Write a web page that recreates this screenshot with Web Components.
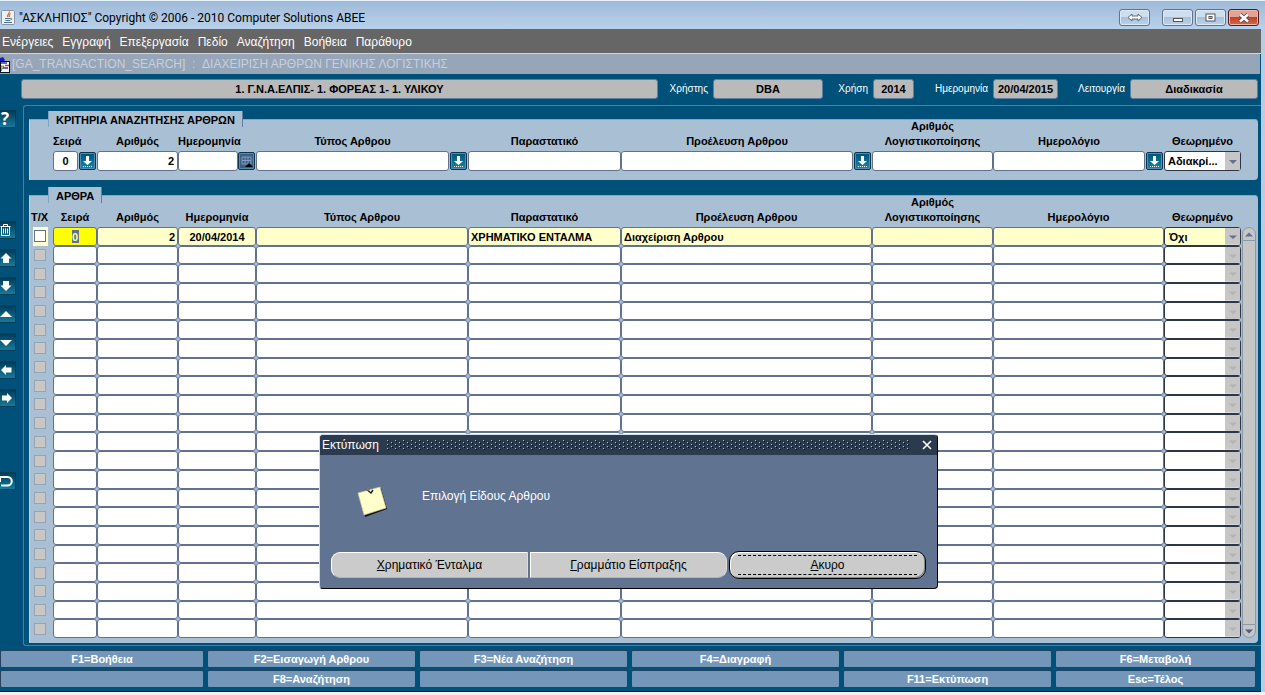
<!DOCTYPE html>
<html lang="el">
<head>
<meta charset="utf-8">
<title>ΑΣΚΛΗΠΙΟΣ</title>
<style>
html, body { margin: 0; height: 100%; }
body { font-family: "Liberation Sans", Arial, sans-serif; background: #eef2f5; overflow: hidden; }
</style>
</head>
<body>
<app-window></app-window>

<template id="app-window">
<style>
:host { display: flex; flex-direction: column; height: 100vh; box-sizing: border-box; padding-bottom: 3px; position: relative; background: #eef2f5; }
.frame { flex: 1; min-height: 0; display: flex; flex-direction: column; margin-right: 4px; background: #005179; border-bottom: 1px solid #04121c; box-shadow: 4px 0 #b7cde3; }
.work { flex: 1; min-height: 0; display: flex; }
.stage { flex: 1; min-width: 0; display: flex; flex-direction: column; margin-bottom: 4px; border: 1px solid #4f7c9e; border-right: 0; border-radius: 3px 0 0 3px; padding: 13px 3px 2px 5px; gap: 15px; }
group-panel.fill { flex: 1; min-height: 0; }
message-dialog { position: absolute; left: 319px; top: 434px; z-index: 2; }
</style>
<title-bar></title-bar>
<div class="frame">
  <menu-bar></menu-bar>
  <form-title></form-title>
  <info-header></info-header>
  <div class="work">
    <tool-rail></tool-rail>
    <main class="stage">
      <group-panel heading="ΚΡΙΤΗΡΙΑ ΑΝΑΖΗΤΗΣΗΣ ΑΡΘΡΩΝ"><search-criteria></search-criteria></group-panel>
      <group-panel class="fill" heading="ΑΡΘΡΑ"><record-table></record-table></group-panel>
    </main>
  </div>
  <key-bar></key-bar>
</div>
<message-dialog heading="Εκτύπωση">Επιλογή Είδους Αρθρου</message-dialog>
</template>

<template id="title-bar">
<style>
:host { display: flex; align-items: center; height: 29px; padding: 0 6px 0 1px; box-sizing: border-box; border-top: 1px solid #e6f3fa; background: linear-gradient(#9fbad8, #b9d1ea); color: #000; }
.logo { width: 14px; height: 15px; margin: 5px 4px 0 0; }
h1 { margin: 5px 0 0; flex: 1; font: 12px/16px Roboto, sans-serif; white-space: nowrap; }
button { display: flex; align-items: center; justify-content: center; width: 31px; height: 17px; margin: 5px 0 0 2px; padding: 0; border: 1px solid #60748c; border-radius: 3px; background: linear-gradient(#cfdeee 45%, #a9c0da 50%, #bdd3ea); box-shadow: inset 0 0 0 1px #dce9f6; }
button.wide { margin-right: 10px; }
button.close { border-color: #5a1a1a; background: linear-gradient(#e4a394 45%, #c2402a 50%, #cf6a4d); box-shadow: inset 0 0 0 1px #e8b8aa; }
</style>
<svg class="logo" viewBox="0 0 14 15"><rect x=".5" y=".5" width="13" height="14" rx="1" fill="#eef1f3" stroke="#8695a3"/><path d="M8 1.500c1.500 2-3 3-1 5.500M9.500 3.500c-2 1-1 2-1 3.500" fill="none" stroke="#e0702c" stroke-width="1.300"/><path d="M4 8.500h5.500M4.500 10.500h4.500M3 12.500h8M9.500 8.500c2-.5 2 1 0 1.500" fill="none" stroke="#4a7296"/></svg>
<h1>"ΑΣΚΛΗΠΙΟΣ" Copyright © 2006 - 2010 Computer Solutions ΑΒΕΕ</h1>
<button class="wide" aria-label="Resize"><svg width="16" height="9" viewBox="0 0 16 9"><path d="M1 4.500 5 1v2h6V1l4 3.500L11 8V6H5v2z" fill="#fff" stroke="#5b6c80"/></svg></button>
<button aria-label="Minimize"><svg width="12" height="10" viewBox="0 0 12 10"><rect x="1.500" y="5.500" width="9" height="3" fill="#fff" stroke="#50555c"/></svg></button>
<button aria-label="Maximize"><svg width="11" height="9" viewBox="0 0 11 9"><rect x="1" y="1" width="9" height="7" fill="#fff" stroke="#50555c"/><rect x="4" y="3.500" width="3" height="2" fill="#9db5cf" stroke="#50555c"/></svg></button>
<button class="close" aria-label="Close"><svg width="12" height="10" viewBox="0 0 12 10"><path d="M2 1.500l8 7M10 1.500l-8 7" stroke="#574044" stroke-width="4"/><path d="M2 1.500l8 7M10 1.500l-8 7" stroke="#fff" stroke-width="2.500"/></svg></button>
</template>

<template id="menu-bar">
<style>
:host { display: block; background: #666; border-bottom: 1px solid #d8d4cc; }
nav { display: flex; gap: 9px; height: 24px; padding-left: 2px; }
a { color: #fff; text-decoration: none; font-size: 12px; line-height: 26px; white-space: nowrap; }
</style>
<nav><a href="#">Ενέργειες</a><a href="#">Εγγραφή</a><a href="#">Επεξεργασία</a><a href="#">Πεδίο</a><a href="#">Αναζήτηση</a><a href="#">Βοήθεια</a><a href="#">Παράθυρο</a></nav>
</template>

<template id="form-title">
<style>
:host { display: flex; align-items: center; height: 20px; margin-right: 1px; background: #97a5b9; color: #c6d0dd; }
svg { width: 10px; height: 17px; margin-right: 2px; flex: none; }
h2 { margin: 0; font-size: 12px; line-height: 22px; font-weight: normal; white-space: pre; }
</style>
<svg viewBox="0 0 10 17"><path d="M0 2l3-1 2 3-2 2H0z" fill="#1c1cc0"/><rect x=".5" y="5.500" width="9" height="11" fill="#fff" stroke="#0d1020"/><path d="M1 7h6M3 12h5" stroke="#2436c8" stroke-width="1.500"/><path d="M5 9.500h4" stroke="#c33" stroke-width="1.500"/><path d="M1 10h3l-3 5z" fill="#f5e63b" stroke="#222" stroke-width=".5"/></svg>
<h2>[GA_TRANSACTION_SEARCH]  :  ΔΙΑΧΕΙΡΙΣΗ ΑΡΘΡΩΝ ΓΕΝΙΚΗΣ ΛΟΓΙΣΤΙΚΗΣ</h2>
</template>

<template id="info-header">
<style>
:host { display: grid; grid-template-columns: 637fr 55px 110fr 50px 41px 79px 65px 72px 128fr; align-items: center; padding: 5px 3px 6px 21px; }
label { color: #fff; font-size: 10px; line-height: 20px; text-align: right; padding-right: 5px; white-space: nowrap; }
input { min-width: 0; width: 100%; height: 20px; box-sizing: border-box; margin: 0; padding: 0; border: 1px solid #5d7f9f; border-radius: 3px; background: #bababa; color: #000; text-align: center; font: bold 11px "Liberation Sans", sans-serif; }
</style>
<input aria-label="Φορέας" readonly value="1. Γ.Ν.Α.ΕΛΠΙΣ- 1. ΦΟΡΕΑΣ 1- 1. ΥΛΙΚΟΥ">
<label for="u">Χρήστης</label><input id="u" readonly value="DBA">
<label for="y">Χρήση</label><input id="y" readonly value="2014">
<label for="d">Ημερομηνία</label><input id="d" readonly value="20/04/2015">
<label for="m">Λειτουργία</label><input id="m" readonly value="Διαδικασία">
</template>

<template id="tool-rail">
<style>
:host { display: flex; flex-direction: column; gap: 10px; width: 23px; padding-top: 5px; }
button { width: 16px; height: 18px; padding: 0; border: 1px solid #0b3c57; border-left: 0; background: linear-gradient(#003c5a, #157a9c); display: flex; align-items: center; }
button:first-of-type { margin-bottom: 83px; }
button:last-of-type { margin-top: 55px; }
svg { width: 14px; height: 16px; fill: #fff; }
.q { color: #fff; font: bold 17px/16px "Open Sans", sans-serif; padding-left: 1px; }
</style>
<button aria-label="Help"><span class="q">?</span></button>
<button aria-label="Delete"><svg viewBox="0 0 14 16"><path d="M.5 4.500h10M3.500 4V2.500h4V4M1.500 5v8.500h8V5M3.500 6.500v5M5.500 6.500v5M7.500 6.500v5" fill="none" stroke="#fff"/></svg></button>
<button aria-label="Previous"><svg viewBox="0 0 14 16"><path d="M6 3 11.500 8.500H9V13H3V8.500H.5z"/></svg></button>
<button aria-label="Next"><svg viewBox="0 0 14 16"><path d="M6 13 11.500 7.500H9V3H3v4.500H.5z"/></svg></button>
<button aria-label="Page up"><svg viewBox="0 0 14 16"><path d="M6 5 12 11H0z"/></svg></button>
<button aria-label="Page down"><svg viewBox="0 0 14 16"><path d="M6 12 12 6H0z"/></svg></button>
<button aria-label="Back"><svg viewBox="0 0 14 16"><path d="M1 8 6 3v2.500h5.500v5H6V13z"/></svg></button>
<button aria-label="Forward"><svg viewBox="0 0 14 16"><path d="M12 8 7 3v2.500H2v5h5V13z"/></svg></button>
<button aria-label="Undo"><svg viewBox="0 0 14 16"><path d="M0 4h7.500a4 4 0 0 1 0 8.500H1M0 4v5" fill="none" stroke="#fff" stroke-width="2"/></svg></button>
</template>

<template id="group-panel">
<style>
:host { display: flex; flex-direction: column; position: relative; border-radius: 1px 4px 4px 1px; background: #a9bfd3; box-shadow: inset 0 1px #86a6bf, inset 1px 0 #c3d3e0; }
h3 { position: absolute; left: 19px; top: -8px; margin: 0; padding: 0 8px; height: 16px; background: #a9bfd3; box-shadow: inset 1px 0 #7fa5c2, inset -1px 0 #5f7f9c; font-size: 11px; line-height: 18px; font-weight: bold; white-space: nowrap; }
</style>
<h3></h3><slot></slot>
</template>

<template id="search-criteria">
<style>
:host { display: grid; grid-template-columns: 44px 81px 78px 212fr 153fr 251fr 121fr 171fr 77px; padding: 0 17px 9px 24px; }
</style>
<criteria-field label="Σειρά" value="0" align="center" action="list"></criteria-field>
<criteria-field label="Αριθμός" value="2" align="right"></criteria-field>
<criteria-field label="Ημερομηνία" action="calendar"></criteria-field>
<criteria-field label="Τύπος Αρθρου" action="list"></criteria-field>
<criteria-field label="Παραστατικό"></criteria-field>
<criteria-field label="Προέλευση Αρθρου" action="list"></criteria-field>
<criteria-field label="Αριθμός Λογιστικοποίησης"></criteria-field>
<criteria-field label="Ημερολόγιο" action="list"></criteria-field>
<criteria-field label="Θεωρημένο" kind="select" value="Αδιακρί..."></criteria-field>
</template>

<template id="criteria-field">
<style>
:host { display: grid; grid-template-columns: minmax(0, 1fr) auto; grid-template-rows: 30px 20px; row-gap: 2px; }
label { grid-column: 1; align-self: end; font-size: 11px; line-height: 15px; font-weight: bold; text-align: center; }
input, select { width: 100%; height: 20px; margin: 0; padding: 0 3px; box-sizing: border-box; border: 1px solid #60728f; border-radius: 3px; background: #fff; color: #000; font: bold 11px "Liberation Sans", sans-serif; }
input { grid-column: 1; }
select { display: block; appearance: none; padding: 0 0 0 3px; border-color: #2c3648; }
.drop { grid-column: 1; position: relative; }
.drop svg { position: absolute; right: 1px; top: 1px; pointer-events: none; }
button { width: 17px; height: 18px; margin: 1px 1px 0 1px; padding: 0; border: 1px solid #0e3550; border-radius: 2px; background: linear-gradient(#00527a, #1a88a4); box-shadow: inset 0 0 0 1px #4f8fb4; display: flex; justify-content: center; align-items: center; }
button.cal { margin-left: 0; background: #3d5f80; }
</style>
</template>

<template id="record-table">
<style>
:host { display: flex; flex: 1; min-height: 0; padding: 0 2px 5px 0; }
table { flex: 1; min-width: 0; display: grid; grid-template-columns: 24px 44px 81px 78px 212fr 153fr 251fr 121fr 171fr 77px; grid-template-rows: 32px; grid-auto-rows: minmax(0, 1fr); }
thead, tbody, tr { display: contents; }
th { align-self: end; padding: 0 0 2px; font-size: 11px; line-height: 15px; font-weight: bold; text-align: center; }
th.tight { white-space: nowrap; padding-right: 3px; }
td { padding: 0; min-width: 0; min-height: 0; display: flex; position: relative; }
td.mark { margin: 0 5px 0 4px; align-items: center; justify-content: flex-start; }
tr.current td.mark { background: #ffffcc; }
input[type=checkbox] { appearance: none; width: 12px; height: 12px; margin: 0 0 0 1px; border: 1px solid #93a5b8; background: #c9c6c3; }
tr.current input[type=checkbox] { background: #fff; border: 1px solid #60728f; }
input.cell, select { width: 100%; margin: 0; padding: 2px 2px 0; box-sizing: border-box; border: 1px solid #60728f; border-radius: 3px; background: #fff; color: #000; font: bold 11px "Liberation Sans", sans-serif; }
tr.current .cell, tr.current select { background-color: #ffffcc; }
tr.current .active { background: linear-gradient(#60728f, #60728f) center / 7px 13px no-repeat #ffff00; color: #ffff99; }
.c { text-align: center; } .r { text-align: right; }
select { appearance: none; padding: 2px 15px 0 4px; border-color: #2c3648; }
td svg { position: absolute; right: 1px; top: 1px; height: calc(100% - 2px); pointer-events: none; }
.scroll { width: 15px; margin-top: 32px; display: flex; flex-direction: column; align-items: center; }
.scroll button { width: 14px; height: 14px; padding: 0; border: 1px solid #8b98a8; background: #c6c6c6; display: flex; align-items: center; justify-content: center; flex: none; }
.scroll button:first-child { border-radius: 7px 7px 0 0; } .scroll button:last-child { border-radius: 0 0 7px 7px; }
.thumb { flex: 1; width: 12px; background: #c6c6c6; border: solid #8b98a8; border-width: 0 1px; }
</style>
<table><thead><tr></tr></thead><tbody></tbody></table>
<div class="scroll"><button aria-label="Scroll up"><svg width="8" height="5"><path d="M0 4.500 4 .5l4 4z" fill="#60728f"/></svg></button><div class="thumb"></div><button aria-label="Scroll down"><svg width="8" height="5"><path d="M0 .5h8l-4 4z" fill="#4b607f"/></svg></button></div>
</template>

<template id="key-bar">
<style>
:host { display: grid; grid-template-columns: 204fr 209fr 209fr 209fr 209fr 201fr; gap: 2px 3px; padding: 0 5px 3px 0; }
button { height: 18px; padding: 0; border: 1px solid #24415e; border-radius: 2px; background: #7497b9; color: #fff; font: bold 11px/16px "Liberation Sans", sans-serif; white-space: nowrap; }
</style>
</template>

<template id="message-dialog">
<style>
:host { display: block; width: 619px; }
section { border: 1px solid #d5dce4; border-right-color: #000; border-bottom-color: #000; border-radius: 4px; overflow: hidden; background: #607391; color: #fff; }
header { display: flex; align-items: center; gap: 8px; height: 20px; padding: 0 4px 0 2px; background: #2b3a4d; }
h2 { margin: 0; font-size: 12px; line-height: 22px; font-weight: normal; }
.grip { flex: 1; height: 11px; }
header button { width: 12px; height: 12px; padding: 0; border: 0; background: none; display: flex; margin-left: 2px; }
.body { display: flex; align-items: flex-start; gap: 32px; padding: 29px 36px 0; height: 67px; }
.body svg { margin-top: 1px; }
p { margin: 4px 0 0; font-size: 12px; line-height: 16px; }
footer { display: grid; grid-template-columns: 1fr 1fr 1fr; gap: 2px; padding: 0 11px 9px; align-items: center; }
footer button { height: 26px; padding: 0; border: 1px solid #fff; border-right-color: #ddd; border-bottom-color: #b5b5b5; background: #cbcbcb; color: #000; font: 12px/22px "Liberation Sans", sans-serif; }
footer button:first-child { border-radius: 9px 0 0 9px; }
footer button:nth-child(2) { border-radius: 0 9px 9px 0; }
footer button.default { height: 28px; border: 1px solid #000; border-radius: 10px; box-shadow: inset 1px 1px #fff, inset -1px -1px #888; padding: 0 8px; }
.default span { display: block; border: dashed #000; border-width: 1px 0; line-height: 18px; }
</style>
<section role="dialog" aria-labelledby="t">
<header><h2 id="t"></h2>
<svg class="grip" width="100%"><defs><pattern id="g" width="8" height="4" patternUnits="userSpaceOnUse"><path d="M0 0h1v1H0zM4 2h1v1H4z" fill="#b4c0cd"/><path d="M1 1h1v1H1zM5 3h1v1H5z" fill="#000"/></pattern></defs><rect width="100%" height="10" fill="url(#g)"/></svg>
<button aria-label="Close"><svg width="12" height="12"><path d="M2 2l8 8M10 2l-8 8" stroke="#fff" stroke-width="1.600"/></svg></button></header>
<div class="body"><svg width="34" height="34" viewBox="0 0 34 34"><path d="M3 9 25 3l6 21-22 8z" fill="#111"/><path d="M2 8 24 2l6 21-22 7z" fill="#ffffcc" stroke="#c8c8a0" stroke-width=".7"/><path d="M10 4l5 4 2-3" stroke="#222" stroke-width="1.500" fill="none"/><circle cx="12" cy="4" r="2" fill="#777"/></svg><p><slot></slot></p></div>
<footer><button><u>Χ</u>ρηματικό Ένταλμα</button><button><u>Γ</u>ραμμάτιο Είσπραξης</button><button class="default"><span><u>Α</u>κυρο</span></button></footer>
</section>
</template>

<script>
class Base extends HTMLElement {
  constructor() {
    super();
    this.attachShadow({ mode: 'open' }).append(document.getElementById(this.localName).content.cloneNode(true));
  }
}
const arrow = (fill, h) => `<svg width="15" height="${h}" viewBox="0 0 15 18" preserveAspectRatio="none"><rect width="15" height="18" fill="#c6c6c6"/><path d="M4 8h8l-4 4z" fill="${fill}"/></svg>`;
const simple = ['title-bar', 'menu-bar', 'form-title', 'info-header', 'tool-rail'];
for (const n of simple) customElements.define(n, class extends Base {});

customElements.define('group-panel', class extends Base {
  connectedCallback() { this.shadowRoot.querySelector('h3').textContent = this.getAttribute('heading'); }
});

customElements.define('criteria-field', class extends Base {
  connectedCallback() {
    const a = n => this.getAttribute(n) || '';
    const control = a('kind') === 'select'
      ? `<div class="drop"><select id="f"><option>${a('value')}</option></select>${arrow('#60728f', 18)}</div>`
      : `<input id="f" value="${a('value')}" style="text-align:${a('align') || 'left'}">`;
    const buttons = {
      list: '<button aria-label="Λίστα τιμών"><svg width="11" height="13"><path d="M4 1h3v5h3L5.500 10 1 6h3z" fill="#fff"/><path d="M1 11.500h9" stroke="#fff" stroke-dasharray="1 1"/></svg></button>',
      calendar: '<button class="cal" aria-label="Ημερολόγιο"><svg width="13" height="14"><path d="M2 3h9v7H2zM5 3v7M8 3v7M2 6.500h9" fill="none" stroke="#7f9fc4"/><path d="M5 13h8L9 9z" fill="#000"/></svg></button>'
    };
    this.shadowRoot.innerHTML += `<label for="f">${a('label')}</label>${control}${buttons[a('action')] || ''}`;
  }
});
customElements.define('search-criteria', class extends Base {});

customElements.define('record-table', class extends Base {
  connectedCallback() {
    const heads = ['Τ/Χ', 'Σειρά', 'Αριθμός', 'Ημερομηνία', 'Τύπος Αρθρου', 'Παραστατικό', 'Προέλευση Αρθρου', 'Αριθμός Λογιστικοποίησης', 'Ημερολόγιο', 'Θεωρημένο'];
    this.shadowRoot.querySelector('thead tr').innerHTML = heads.map((h, i) => `<th scope="col"${i < 1 ? ' class="tight"' : ''}>${h}</th>`).join('');
    const first = ['0', '2', '20/04/2014', '', 'ΧΡΗΜΑΤΙΚΟ ΕΝΤΑΛΜΑ', 'Διαχείριση Αρθρου', '', ''];
    const align = ['c active', 'r', 'c', '', '', '', '', ''];
    let rows = '';
    for (let r = 0; r < 22; r++) {
      rows += `<tr${r ? '' : ' class="current"'}><td class="mark"><input type="checkbox" aria-label="Τ/Χ"></td>`;
      for (let c = 0; c < 8; c++) rows += `<td><input class="cell ${align[c]}" aria-label="${heads[c + 1]}" value="${r ? '' : first[c]}"></td>`;
      rows += `<td><select aria-label="Θεωρημένο"><option>${r ? '' : 'Όχι'}</option></select>${arrow(r ? '#b3b3b3' : '#60728f', 16)}</td></tr>`;
    }
    this.shadowRoot.querySelector('tbody').innerHTML = rows;
  }
});

customElements.define('key-bar', class extends Base {
  connectedCallback() {
    const keys = ['F1=Βοήθεια', 'F2=Εισαγωγή Αρθρου', 'F3=Νέα Αναζήτηση', 'F4=Διαγραφή', '', 'F6=Μεταβολή', '', 'F8=Αναζήτηση', '', '', 'F11=Εκτύπωση', 'Esc=Τέλος'];
    for (const k of keys) {
      const b = document.createElement('button');
      b.textContent = k;
      this.shadowRoot.append(b);
    }
  }
});

customElements.define('message-dialog', class extends Base {
  connectedCallback() { this.shadowRoot.querySelector('h2').textContent = this.getAttribute('heading'); }
});
customElements.define('app-window', class extends Base {});
</script>
</body>
</html>
